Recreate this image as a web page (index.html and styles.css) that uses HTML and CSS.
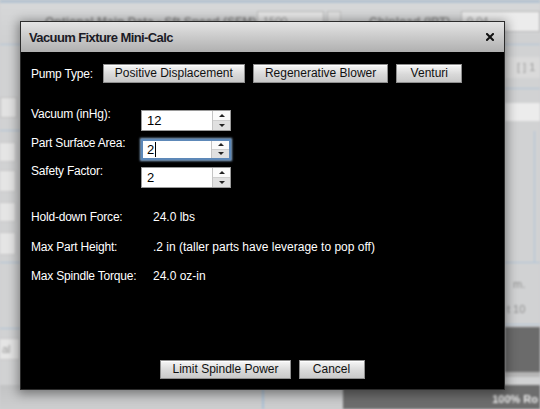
FILE: index.html
```html
<!DOCTYPE html>
<html>
<head>
<meta charset="utf-8">
<link rel="stylesheet" href="styles.css">
</head>
<body>
<div class="page">
  <div class="strip"></div>
  <div class="toprow">
    <span class="bg-label l1">Optional Main Data - Sft Speed (SFM)</span>
    <span class="bg-input i1">1500</span>
    <span class="bg-spin"></span>
    <span class="bg-label l2">Chipload (IPT)</span>
    <span class="bg-input i2">0.04</span>
  </div>
  <div class="mid">
    <div class="leftcol">
      <div class="lspin"></div>
      <div class="bline m12"></div>
      <div class="lbox b1"></div>
      <div class="lbox b2"></div>
      <div class="lbox b3"></div>
      <div class="lbox b4"></div>
      <div class="bline m7"></div>
      <div class="bline m65"></div>
      <div class="lbox b5">al</div>
    </div>
    <div class="rightcol">
      <div class="rrow">[ ] 1</div>
      <div class="bline m10"></div>
      <div class="rwhite"></div>
      <div class="rpanel"></div>
      <div class="bline m0"></div>
      <div class="rtext t1">m.</div>
      <div class="rtext t2">t 10</div>
      <div class="bline m8"></div>
      <div class="rdark"></div>
      <div class="rlight"></div>
    </div>
  </div>
  <div class="bottomrow">
    <div class="bl"></div>
    <div class="vline"></div>
    <div class="bl2"></div>
    <div class="darkbar">100% Ro</div>
  </div>
</div>

<div class="dialog">
  <div class="titlebar">
    <span class="title">Vacuum Fixture Mini-Calc</span>
    <svg class="close" width="8" height="8" viewBox="0 0 8 8"><path d="M1 1 L7 7 M7 1 L1 7" stroke="#111" stroke-width="2" stroke-linecap="square"/></svg>
  </div>
  <div class="body">
    <div class="pumprow">
      <span class="pumplabel">Pump Type:</span>
      <button class="btn">Positive Displacement</button>
      <button class="btn">Regenerative Blower</button>
      <button class="btn">Venturi</button>
    </div>
    <div class="fields">
      <span class="flabel">Vacuum (inHg):</span>
      <div class="spinbox"><span class="val">12</span><span class="spin"><span class="up"><i class="tri-up"></i></span><span class="down"><i class="tri-down"></i></span></span></div>
      <span class="flabel">Part Surface Area:</span>
      <div class="spinbox focus"><span class="val">2<i class="caret"></i></span><span class="spin"><span class="up"><i class="tri-up"></i></span><span class="down"><i class="tri-down"></i></span></span></div>
      <span class="flabel">Safety Factor:</span>
      <div class="spinbox"><span class="val">2</span><span class="spin"><span class="up"><i class="tri-up"></i></span><span class="down"><i class="tri-down"></i></span></span></div>
    </div>
    <div class="results">
      <span class="rlabel">Hold-down Force:</span><span class="rval">24.0 lbs</span>
      <span class="rlabel">Max Part Height:</span><span class="rval">.2 in (taller parts have leverage to pop off)</span>
      <span class="rlabel">Max Spindle Torque:</span><span class="rval">24.0 oz-in</span>
    </div>
    <div class="actions">
      <button class="btn">Limit Spindle Power</button>
      <button class="btn">Cancel</button>
    </div>
  </div>
</div>
</body>
</html>
```

FILE: styles.css
```css
* { box-sizing: border-box; }
html, body { margin: 0; padding: 0; }
body {
  width: 540px;
  height: 409px;
  overflow: hidden;
  position: relative;
  background: #cfd0d1;
  font-family: "Liberation Sans", Arial, sans-serif;
}

/* blurred background page */
.page {
  width: 540px;
  height: 409px;
  display: flex;
  flex-direction: column;
  background: #d1d2d3;
  filter: blur(0.9px);
  color: #8a8a8a;
}
.strip { height: 3px; background: #b4c3d1; flex: none; }
.toprow {
  height: 42px;
  flex: none;
  display: flex;
  align-items: flex-start;
  padding: 8px 0 0 45px;
  border-bottom: 1px solid #b2c5d8;
  background: linear-gradient(#d7d8d9, #cfd0d1);
  white-space: nowrap;
  overflow: hidden;
}
.bg-label { font-size: 12px; font-weight: bold; line-height: 16px; margin-top: 3px; color: #8d8d8d; }
.l1 { width: 200px; }
.l2 { width: 80px; margin-left: 28px; }
.bg-input {
  height: 21px;
  border: 1px solid #b9b9b9;
  background: #e6e6e6;
  font-size: 11px;
  line-height: 19px;
  padding-left: 5px;
  color: #999;
}
.i1 { width: 68px; margin-left: 12px; }
.i2 { width: 80px; margin-left: 12px; background: #ececec; }
.bg-spin { width: 14px; height: 19px; margin-left: 3px; border: 1px solid #bcbcbc; background: #e0e0e0; }

.mid { flex: 1; display: flex; justify-content: space-between; }
.leftcol { width: 20px; display: flex; flex-direction: column; }
.rightcol { width: 35px; display: flex; flex-direction: column; }
.bline { height: 1px; background: #afc3d7; flex: none; }
.m12 { margin-top: 12px; }
.m7 { margin-top: 7px; }
.m65 { margin-top: 65px; }
.m10 { margin-top: 10px; }
.m0 { margin-top: 0; }
.m8 { margin-top: 8px; }
.lspin { margin-top: 52px; width: 17px; height: 21px; border: 1px solid #c2c2c2; background: #e2e2e2; flex: none; }
.lbox { width: 16px; background: #e5e5e5; border: 1px solid #c9c9c9; border-left: 0; flex: none; }
.b1 { margin-top: 11px; height: 20px; }
.b2 { margin-top: 8px; height: 22px; }
.b3 { margin-top: 10px; height: 20px; }
.b4 { margin-top: 10px; height: 23px; }
.b5 { margin-top: 9px; height: 22px; width: 20px; font-size: 11px; line-height: 20px; color: #999; overflow: hidden; white-space: nowrap; padding-left: 2px; }

.rrow { margin-top: 12px; height: 21px; font-size: 11px; line-height: 21px; padding-left: 12px; color: #9a9a9a; white-space: nowrap; flex: none; background: #dadada; }
.rwhite { margin-top: 14px; height: 18px; background: #ececec; flex: none; }
.rpanel { margin-top: 10px; height: 131px; border-right: 1px solid #afc3d7; margin-right: 5px; flex: none; }
.rtext { font-size: 11px; color: #909090; white-space: nowrap; line-height: 14px; padding-left: 8px; flex: none; }
.t1 { margin-top: 14px; }
.t2 { margin-top: 11px; padding-left: 2px; }
.rdark { margin-top: 2px; height: 45px; background: #6b6b6b; flex: none; }
.rlight { height: 5px; background: #b6b6b6; flex: none; }

.bottomrow { height: 24px; display: flex; flex: none; }
.bl { width: 262px; background: linear-gradient(#c2c3c4, #cdcecf); }
.vline { width: 2px; background: #a8bfd5; }
.bl2 { width: 79px; background: linear-gradient(#c2c3c4, #cdcecf); }
.darkbar {
  flex: 1;
  background: #6d6d6d;
  color: #eeeeee;
  font-size: 11px;
  font-weight: bold;
  text-align: right;
  line-height: 24px;
  padding: 2px 2px 0 0;
  white-space: nowrap;
}

/* dialog */
.dialog {
  position: absolute;
  left: 20px;
  top: 21px;
  width: 485px;
  height: 369px;
  border: 1px solid #2c2c2c;
  background: #000;
  display: flex;
  flex-direction: column;
  box-shadow: 0 2px 10px 2px rgba(0, 0, 0, 0.4);
}
.titlebar {
  height: 30px;
  flex: none;
  display: flex;
  align-items: center;
  justify-content: space-between;
  padding: 0 10px 0 8px;
  background: linear-gradient(#e4e4e4, #b0b0b0);
}
.title {
  font-size: 13px;
  font-weight: bold;
  letter-spacing: -0.6px;
  color: #1b1b26;
}
.close { display: block; }

.body {
  flex: 1;
  display: flex;
  flex-direction: column;
  padding: 12px 10px 10px 10px;
  color: #ffffff;
  font-size: 12px;
}
.pumprow { display: flex; align-items: center; gap: 8px; }
.pumplabel { margin-right: 2px; letter-spacing: -0.2px; }

.btn {
  height: 19px;
  min-width: 66px;
  padding: 0 11px;
  border: 1px solid #8f8f8f;
  background: linear-gradient(#f7f7f7, #d9d9d9 55%, #c9c9c9);
  box-shadow: inset 0 1px 0 #ffffff;
  font-family: "Liberation Sans", Arial, sans-serif;
  font-size: 12px;
  line-height: 17px;
  color: #111;
  margin: 0;
}

.fields {
  margin-top: 24px;
  display: grid;
  grid-template-columns: 110px auto;
  row-gap: 4.5px;
  justify-content: start;
  align-items: start;
}
.flabel { line-height: 14px; letter-spacing: -0.2px; }
.spinbox {
  margin-top: 3px;
  width: 90px;
  height: 21px;
  display: flex;
  border: 1px solid #9a9a9a;
  background: #fff;
}
.spinbox.focus {
  border: 2px solid #5d88b8;
  box-shadow: 0 0 2px 1px #8fb0d4;
}
.val {
  flex: 1;
  color: #000;
  font-size: 13px;
  line-height: 19px;
  padding-left: 5px;
  display: flex;
  align-items: center;
}
.focus .val { line-height: 17px; padding-left: 4px; }
.caret { display: inline-block; width: 1px; height: 15px; background: #000; margin-left: 1px; }
.spin {
  width: 18px;
  display: flex;
  flex-direction: column;
  border-left: 1px solid #c4c4c4;
}
.spin .up, .spin .down {
  flex: 1;
  display: flex;
  align-items: center;
  justify-content: center;
}
.spin .up { background: #fbfbfb; border-bottom: 1px solid #cfcfcf; }
.spin .down { background: #e0e0e0; }
.tri-up {
  width: 0; height: 0;
  border-left: 3px solid transparent;
  border-right: 3px solid transparent;
  border-bottom: 3px solid #222;
}
.tri-down {
  width: 0; height: 0;
  border-left: 3px solid transparent;
  border-right: 3px solid transparent;
  border-top: 3px solid #222;
}

.results {
  margin-top: 22px;
  display: grid;
  grid-template-columns: 122px auto;
  row-gap: 15.5px;
  line-height: 14px;
}
.rlabel { letter-spacing: -0.2px; }

.actions {
  margin-top: auto;
  display: flex;
  justify-content: center;
  gap: 8px;
}
```
